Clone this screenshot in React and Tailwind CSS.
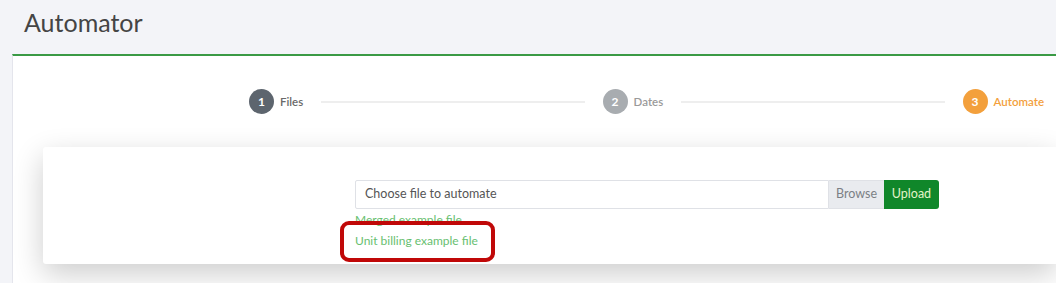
import React from "react";

const Step = ({ num, label, circle, text }) => (
  <div className="flex items-center gap-[6px] shrink-0">
    <span className={`flex h-[25px] w-[25px] items-center justify-center rounded-full text-[12px] font-bold text-white ${circle}`}>
      {num}
    </span>
    <span className={`text-[11.5px] font-semibold ${text}`}>{label}</span>
  </div>
);

const App = () => {
  return (
    <div className="h-[283px] w-[1056px] overflow-hidden bg-[#f3f4f8] font-['Lato',sans-serif]">
      <h1 className="pl-[24px] pt-[5px] text-[25px] leading-[34px] text-[#454545]">Automator</h1>

      <div className="ml-[12px] mt-[15px] h-[240px] border-t-2 border-l border-t-[#3a9a45] border-l-[#e4e5ec] bg-white">
        <div className="flex items-center pl-[236px] pr-[12px] pt-[33px]">
          <Step num="1" label="Files" circle="bg-[#5d656e]" text="text-[#6a6a6a]" />
          <div className="mx-[18px] h-[2px] flex-1 bg-[#eeeeee]" />
          <Step num="2" label="Dates" circle="bg-[#a8acb0]" text="text-[#9a9a9a]" />
          <div className="mx-[18px] h-[2px] flex-1 bg-[#eeeeee]" />
          <Step num="3" label="Automate" circle="bg-[#f3a03c]" text="text-[#f3a03c]" />
        </div>

        <div className="ml-[30px] mt-[33px] h-[117px] rounded-l-[3px] bg-white pl-[312px] pt-[33px] shadow-[0_10px_30px_rgba(0,0,0,0.2)]">
          <div className="flex h-[29px] w-[584px] text-[12.5px]">
            <div className="flex flex-1 items-center rounded-l-[2px] border border-[#dfe1e6] pl-[9px] text-[#555]">
              Choose file to automate
            </div>
            <button className="w-[55px] border-y border-[#dfe1e6] bg-[#e9ebef] text-[#7b7f85]">Browse</button>
            <button className="w-[55px] rounded-r-[3px] bg-[#10872a] text-[#e3f3c8]">Upload</button>
          </div>
          <div className="relative">
            <a className="mt-[4px] block text-[12px] leading-[14px] text-[#68c070]">Merged example file</a>
            <a className="mt-[7px] block text-[12px] leading-[14px] text-[#68c070]">Unit billing example file</a>
            <div className="absolute left-[-15px] top-[8px] h-[41px] w-[155px] rounded-[9px] border-[4px] border-[#c00808]" />
          </div>
        </div>
      </div>
    </div>
  );
};

export default App;
